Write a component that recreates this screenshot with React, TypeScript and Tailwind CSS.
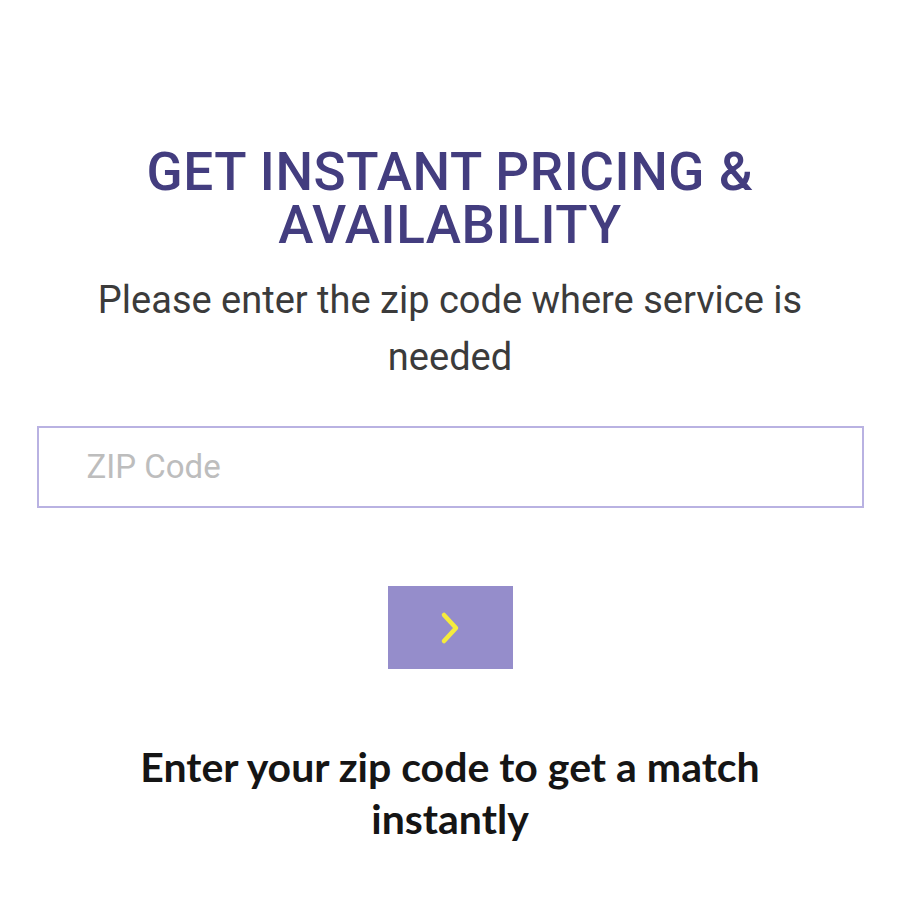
import React from "react";

export default function App() {
  return (
    <div className="w-[900px] h-[900px] bg-white flex flex-col items-center pt-[146px] font-['Roboto',sans-serif]">
      <h1 className="text-center text-[53px] leading-[53px] font-medium text-[#433d7f] tracking-[0.6px]">
        GET INSTANT PRICING &amp;
        <br />
        AVAILABILITY
      </h1>
      <p className="mt-[20px] text-center text-[38px] leading-[57px] text-[#3b3b3b] w-[760px]">
        Please enter the zip code where service is needed
      </p>
      <div className="mt-[40px] w-[827px] h-[82px] border-2 border-[#b9b2e2] flex items-center pl-[48px]">
        <input
          placeholder="ZIP Code"
          className="w-full outline-none text-[33px] placeholder:text-[#bdbdbd] bg-transparent"
        />
      </div>
      <button className="mt-[78px] w-[125px] h-[83px] bg-[#958dcb] flex items-center justify-center">
        <svg width="22" height="34" viewBox="0 0 22 34" fill="none">
          <path d="M5 4 L17 17 L5 30" stroke="#f5eb3c" strokeWidth="4.5" strokeLinecap="round" strokeLinejoin="round" />
        </svg>
      </button>
      <p className="mt-[72px] text-center text-[41px] leading-[52px] font-bold text-[#151515] w-[700px] font-['Lato',sans-serif]">
        Enter your zip code to get a match instantly
      </p>
    </div>
  );
}
